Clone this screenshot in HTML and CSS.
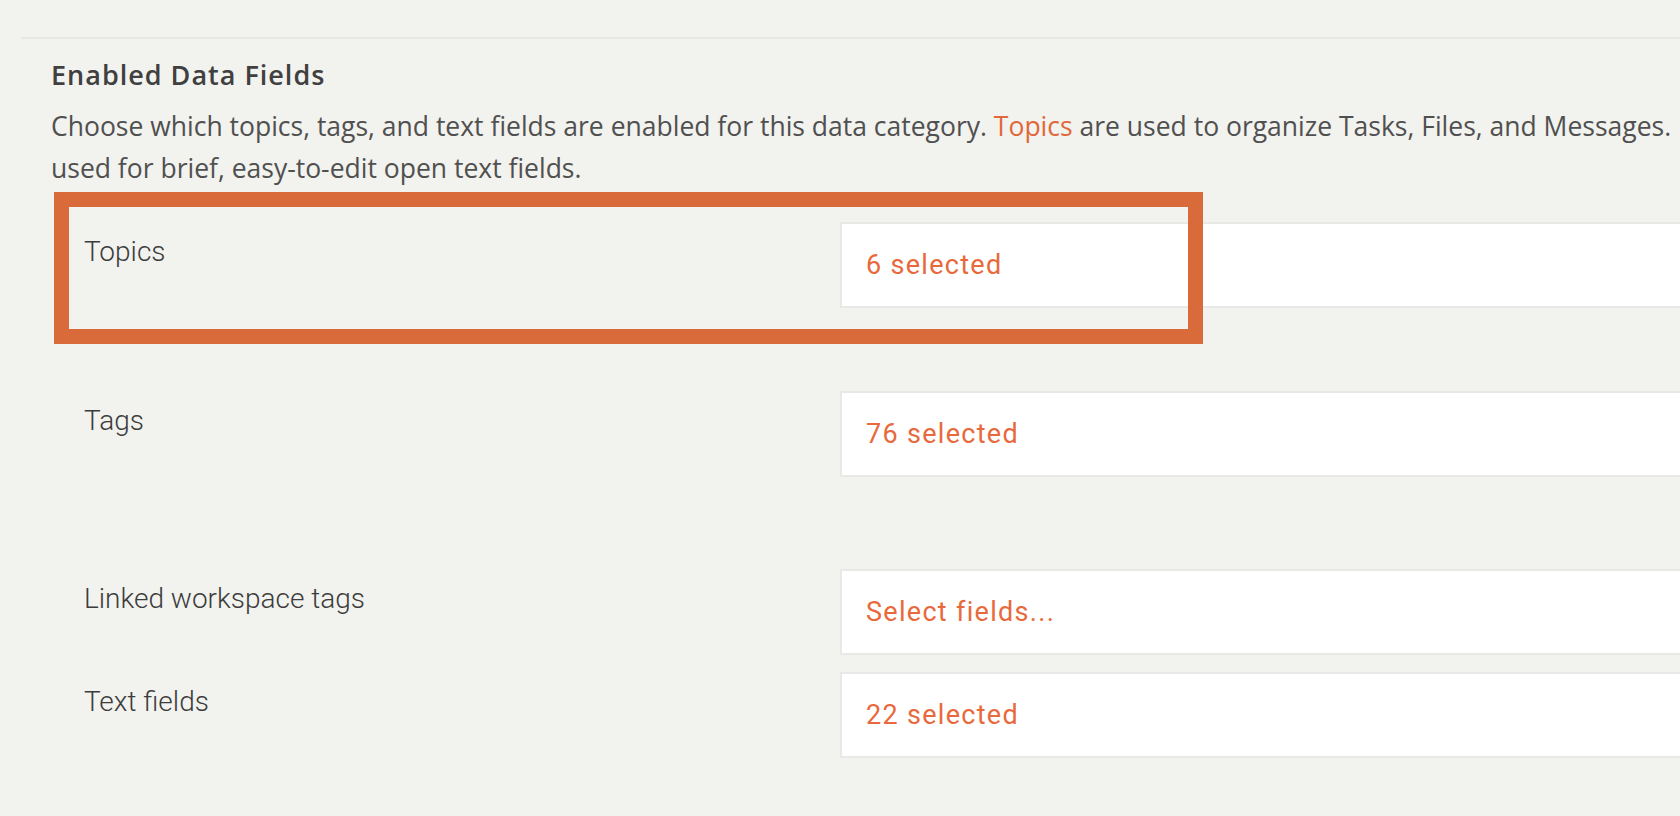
FILE: index.html
```html
<!DOCTYPE html>
<html>
<head>
  <title>Enabled Data Fields</title>
  <link rel="stylesheet" href="styles.css">
</head>
<body>

<div class="panel">
  <h3 class="section-title">Enabled Data Fields</h3>
  <p class="section-desc">Choose which topics, tags, and text fields are enabled for this data category. <a href="#">Topics</a> are used to organize Tasks, Files, and Messages.<br>used for brief, easy-to-edit open text fields.</p>

  <div class="field-list">
    <div class="field-row field-row--topics">
      <div class="field-label">Topics</div>
      <div class="field-select">6 selected</div>
      <div class="highlight"></div>
    </div>
    <div class="field-row field-row--tags">
      <div class="field-label">Tags</div>
      <div class="field-select">76 selected</div>
    </div>
    <div class="field-row field-row--linked">
      <div class="field-label">Linked workspace tags</div>
      <div class="field-select">Select fields...</div>
    </div>
    <div class="field-row">
      <div class="field-label">Text fields</div>
      <div class="field-select">22 selected</div>
    </div>
  </div>
</div>

</body>
</html>
```

FILE: styles.css
```css
body {
  margin: 0;
  background: #f2f2ee;
  overflow: hidden;
  font-family: "Open Sans", "Liberation Sans", sans-serif;
}
.panel {
  margin: 37px 0 0 21px;
  border-top: 2px solid #e7e7e4;
  padding-left: 30px;
  width: 2200px;
}
.section-title {
  margin: 21px 0 0;
  font-size: 27px;
  line-height: 30px;
  font-weight: 600;
  letter-spacing: 1px;
  color: #404040;
}
.section-desc {
  margin: 15px 0 0;
  font-size: 26.5px;
  line-height: 42px;
  color: #505050;
  white-space: nowrap;
}
.section-desc a {
  color: #e0683a;
  text-decoration: none;
}
.field-list {
  margin-top: 33px;
}
.field-row {
  position: relative;
  display: flex;
  padding-left: 33px;
  margin-bottom: 17px;
}
.field-row--topics {
  margin-bottom: 83px;
}
.field-row--tags {
  margin-bottom: 92px;
}
.field-label {
  width: 756px;
  padding-top: 14px;
  font-family: Roboto, "Liberation Sans", sans-serif;
  font-size: 28px;
  font-weight: 300;
  line-height: 32px;
  color: #3c3c3c;
}
.field-select {
  width: 1100px;
  height: 86px;
  box-sizing: border-box;
  display: flex;
  align-items: center;
  padding-left: 24px;
  background: #fff;
  border: 2px solid #e8e8e6;
  font-family: Roboto, "Liberation Sans", sans-serif;
  font-size: 27px;
  letter-spacing: 1.3px;
  color: #e8693c;
}
.highlight {
  position: absolute;
  left: 3px;
  top: -30px;
  width: 1149px;
  height: 152px;
  box-sizing: border-box;
  border: 15px solid #d96a3a;
}
```
